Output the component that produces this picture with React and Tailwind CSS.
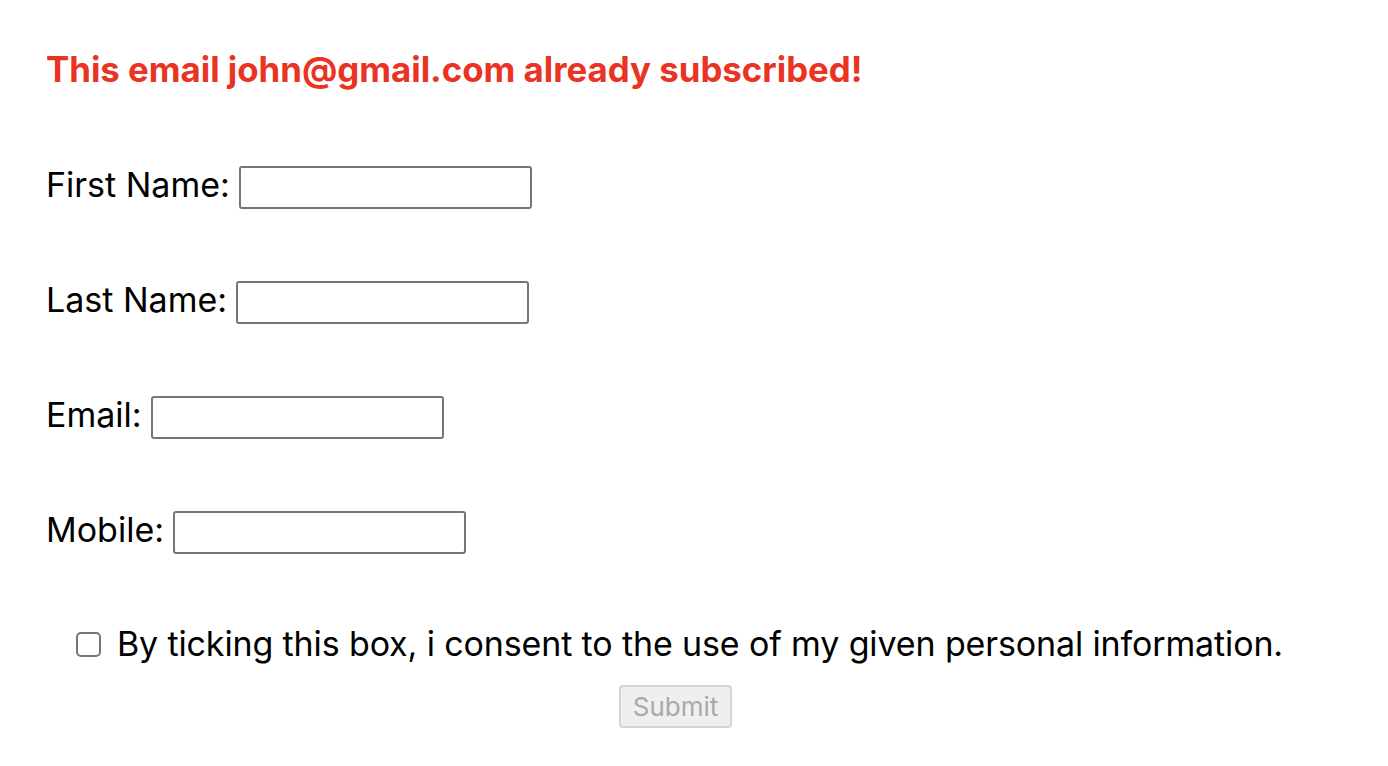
export default function App() {
  const font = { fontFamily: "Inter, 'Liberation Sans', sans-serif" };
  const Row = ({ label }) => (
    <div className="flex items-center h-[43px] mb-[72px]">
      <span className="text-[34px] leading-none text-black pb-[6px]">{label}</span>
      <input
        type="text"
        className="ml-[9px] w-[293px] h-[43px] border-2 border-[#767676] rounded-[3px] bg-white"
      />
    </div>
  );
  return (
    <div className="bg-white w-[1388px] h-[766px] pl-[46px] pt-[49px]" style={font}>
      <h1 className="text-[34.8px] font-bold text-[#ea3323] leading-[40px]">
        This email john@gmail.com already subscribed!
      </h1>
      <div className="mt-[77px]">
        <Row label="First Name:" />
        <Row label="Last Name:" />
        <Row label="Email:" />
        <Row label="Mobile:" />
      </div>
      <div className="w-[1267px] flex flex-col items-center -mt-[2px]">
        <label className="flex items-center">
          <span className="w-[25px] h-[25px] border-2 border-[#767676] rounded-[5px] bg-white mr-[16px]" />
          <span className="text-[34px] text-black leading-[40px] tracking-[-0.13px]">
            By ticking this box, i consent to the use of my given personal information.
          </span>
        </label>
        <button
          disabled
          className="mt-[21px] mr-[8px] w-[113px] h-[43px] bg-[#efefef] border-2 border-[#d4d4d4] rounded-[4px] text-[26px] text-[#a9a9a9]"
        >
          Submit
        </button>
      </div>
    </div>
  );
}
